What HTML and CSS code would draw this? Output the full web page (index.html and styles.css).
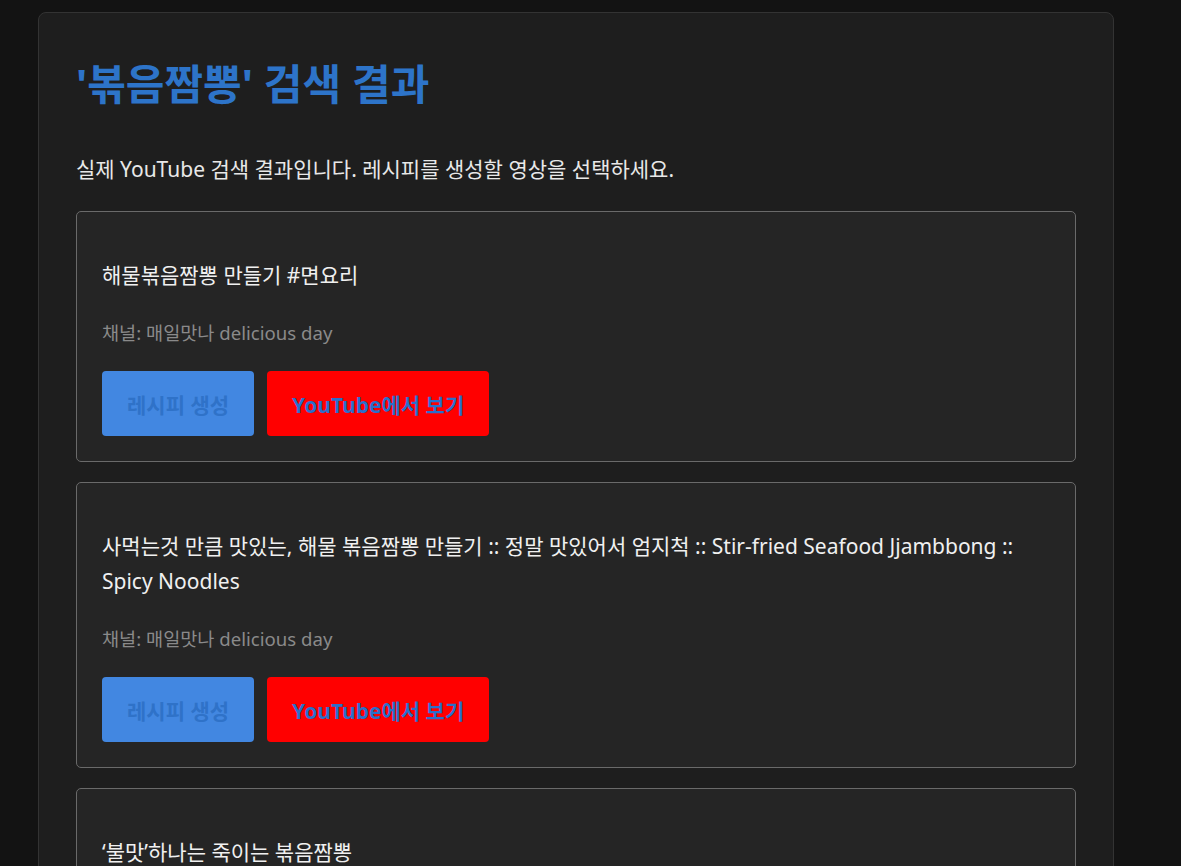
FILE: index.html
```html
<!DOCTYPE html>
<html lang="ko">
<head>
<meta charset="utf-8">
<title>검색 결과</title>
<link rel="stylesheet" href="styles.css">
</head>
<body>
<main class="panel">
  <h1 class="title">'볶음짬뽕' 검색 결과</h1>
  <p class="lead">실제 YouTube 검색 결과입니다. 레시피를 생성할 영상을 선택하세요.</p>
  <section class="results">
    <article class="card">
      <h3 class="card-title">해물볶음짬뽕 만들기 #면요리</h3>
      <p class="channel">채널: 매일맛나 delicious day</p>
      <div class="actions">
        <button class="btn btn-recipe">레시피 생성</button>
        <button class="btn btn-yt">YouTube에서 보기</button>
      </div>
    </article>
    <article class="card">
      <h3 class="card-title">사먹는것 만큼 맛있는, 해물 볶음짬뽕 만들기 :: 정말 맛있어서 엄지척 :: Stir-fried Seafood Jjambbong :: Spicy Noodles</h3>
      <p class="channel">채널: 매일맛나 delicious day</p>
      <div class="actions">
        <button class="btn btn-recipe">레시피 생성</button>
        <button class="btn btn-yt">YouTube에서 보기</button>
      </div>
    </article>
    <article class="card">
      <h3 class="card-title">‘불맛’하나는 죽이는 볶음짬뽕</h3>
      <p class="channel">채널: 매일맛나 delicious day</p>
      <div class="actions">
        <button class="btn btn-recipe">레시피 생성</button>
        <button class="btn btn-yt">YouTube에서 보기</button>
      </div>
    </article>
  </section>
</main>
</body>
</html>
```
FILE: styles.css
```css
html, body {
  margin: 0;
  background: #131313;
}
body {
  padding: 12px 0 0 38px;
  font-family: "Noto Sans", "Noto Sans CJK KR", sans-serif;
  color: #e6e6e6;
}
.panel {
  width: 1000px;
  background: #1e1e1e;
  border: 1px solid #333;
  border-radius: 8px;
  padding: 37px 37px 40px;
}
.title {
  margin: 10px 0 0;
  font-size: 42px;
  line-height: 48px;
  font-weight: 700;
  color: #2d74c9;
}
.lead {
  margin: 47px 0 0;
  font-size: 21px;
  line-height: 28px;
  color: #e8e8e8;
}
.results {
  margin-top: 28px;
  display: flex;
  flex-direction: column;
  gap: 20px;
}
.card {
  background: #252525;
  border: 1px solid #6a6a6a;
  border-radius: 5px;
  padding: 46px 25px 25px;
}
.card-title {
  margin: 0 0 26px;
  font-size: 21px;
  line-height: 35px;
  font-weight: 400;
  color: #f0f0f0;
}
.channel {
  margin: 0 0 25px;
  font-size: 18.6px;
  line-height: 27px;
  color: #8a8a8a;
}
.actions {
  display: flex;
  gap: 13px;
}
.btn {
  height: 65px;
  border: none;
  border-radius: 4px;
  padding: 0 25px;
  font-family: inherit;
  font-size: 21px;
  font-weight: 700;
  color: #2a6fcb;
}
.btn-recipe {
  background: #4287e1;
  color: #2f72c8;
}
.btn-yt {
  background: #ff0000;
}
```
